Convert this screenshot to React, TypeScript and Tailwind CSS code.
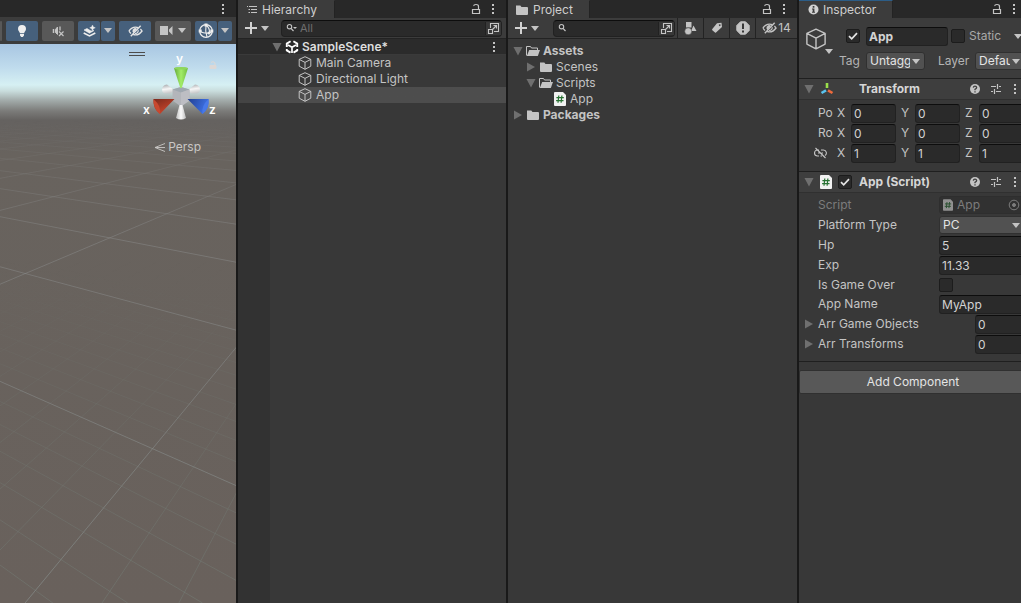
import { useState } from "react";
import type { ReactNode } from "react";

interface IconProps {
  className?: string;
}

function Caret({ className = "" }: IconProps) {
  return (
    <svg viewBox="0 0 8 5" className={`w-2 h-[5px] shrink-0 fill-[#c4c4c4] ${className}`}>
      <path d="M0 0h8L4 5z" />
    </svg>
  );
}

function Foldout({ open, className = "" }: { open: boolean; className?: string }) {
  return (
    <svg viewBox="0 0 10 10" className={`size-[10px] shrink-0 fill-[#6f6f6f] ${className}`}>
      {open ? <path d="M0.5 1h9L5 9.5z" /> : <path d="M1 0.5v9L9 5z" />}
    </svg>
  );
}

function Dots({ className = "" }: IconProps) {
  return (
    <svg viewBox="0 0 4 12" className={`w-1 h-3 shrink-0 fill-[#c4c4c4] ${className}`}>
      <path d="M1 1h2v2H1zM1 5h2v2H1zM1 9h2v2H1z" />
    </svg>
  );
}

function LockOpen({ className = "" }: IconProps) {
  return (
    <svg viewBox="0 0 10 12" className={`w-[10px] h-3 shrink-0 fill-none stroke-current ${className}`}>
      <path d="M1.5 6.5h7v4h-7z" strokeWidth="1.2" />
      <path d="M7.5 6V3.5q0-2-2.5-2T3 3" strokeWidth="1.2" />
    </svg>
  );
}

function Cube({ className = "" }: IconProps) {
  return (
    <svg viewBox="0 0 14 14" className={`shrink-0 fill-none stroke-[#c4c4c4] ${className}`}>
      <path d="M7 .7l5.8 2.7v6.8L7 13.3 1.2 10.2V3.4zM1.2 3.4L7 6.4l5.8-3M7 6.4v6.9" strokeLinejoin="round" />
    </svg>
  );
}

function UnityLogo() {
  return (
    <svg viewBox="0 0 14 14" className="size-[14px] shrink-0 fill-none stroke-white">
      <path d="M5.6 1.3L1.8 3.6V7M8.4 1.3l3.8 2.3V7M1.8 9v1.4L5.5 12.6M12.2 9v1.4L8.5 12.6" strokeWidth="1.9" />
      <path d="M7 7.3v5.7M7 7.3L3 5M7 7.3L11 5" strokeWidth="1.7" />
    </svg>
  );
}

function Folder({ open = false }: { open?: boolean }) {
  return (
    <svg viewBox="0 0 14 12" className="w-[14px] h-3 shrink-0 fill-[#c4c4c4]">
      {open ? (
        <>
          <path d="M.5 10.5V1.5h4l1 1.5h6v2" fill="none" stroke="#c4c4c4" />
          <path d="M3.2 5H14l-2.2 6H.8z" />
        </>
      ) : (
        <path d="M1 1.5h4.3l1.2 1.5H12q1 0 1 1v6q0 1-1 1H2q-1 0-1-1z" />
      )}
    </svg>
  );
}

function ScriptIcon({ dim = false }: { dim?: boolean }) {
  return (
    <svg viewBox="0 0 12 14" className={dim ? "w-[10px] h-3 shrink-0 opacity-50" : "w-3 h-[14px] shrink-0"}>
      <path d="M1 0h8l3 3v10q0 1-1 1H1q-1 0-1-1V1q0-1 1-1z" fill="#f1f1f1" />
      <path d="M4.8 3.5l-.8 7.3M7.9 3.5l-.8 7.3M2.4 5.7h7.4M2.1 8.6h7.4" stroke="#287233" strokeWidth="1.2" />
    </svg>
  );
}

function Popout() {
  return (
    <svg viewBox="0 0 13 13" className="size-[13px] fill-none stroke-[#c4c4c4]">
      <path d="M3.5 6V1.5h8v8H7M1.5 7.5h4v4h-4zM5.5 7.5l4-4M6.5 3.5h3v3" strokeWidth="1.1" />
    </svg>
  );
}

function SearchGlyph({ caret = false }: { caret?: boolean }) {
  return (
    <svg viewBox="0 0 11 10" className="w-[11px] h-[10px] shrink-0 fill-none stroke-[#c4c4c4]">
      <circle cx="3.5" cy="3.7" r="2.2" strokeWidth="1.1" />
      <path d="M5 5.3L7.5 8" strokeWidth="1.2" />
      {caret && <path d="M7 4h4L9 6z" fill="#c4c4c4" stroke="none" />}
    </svg>
  );
}

function EyeSlash({ className = "" }: IconProps) {
  return (
    <svg viewBox="0 0 16 12" className={`shrink-0 fill-none stroke-current ${className}`}>
      <path d="M1 6q3-4.2 7-4.2 1.6 0 3 .6M13.2 4q1 .8 1.8 2-3 4.2-7 4.2-1.4 0-2.6-.5M3.2 8.7Q2 7.5 1 6" strokeWidth="1.4" />
      <path d="M13.5.5L3 11.5" strokeWidth="1.5" />
      <path d="M6 8.2a2.8 2.8 0 0 1 3.6-4.5z" fill="currentColor" stroke="none" />
      <path d="M10.8 5a3 3 0 0 1-3.3 3.7" strokeWidth="1.2" />
    </svg>
  );
}

function PlusMenu({ label }: { label: string }) {
  return (
    <button type="button" aria-label={label} className="flex items-center gap-1 shrink-0">
      <svg viewBox="0 0 12 12" className="size-3 stroke-[#d2d2d2]">
        <path d="M6 0v12M0 6h12" strokeWidth="2" />
      </svg>
      <Caret />
    </button>
  );
}

function CheckBox({ label, defaultChecked = false }: { label: string; defaultChecked?: boolean }) {
  return (
    <span className="relative block size-[14px] shrink-0">
      <input
        type="checkbox"
        aria-label={label}
        defaultChecked={defaultChecked}
        className="peer block size-[14px] appearance-none rounded-xs border border-[#1c1c1c] bg-[#2a2a2a]"
      />
      <svg
        viewBox="0 0 14 14"
        className="hidden peer-checked:block absolute inset-0 size-[14px] fill-none stroke-[#e4e4e4] pointer-events-none"
      >
        <path d="M3 7.2l2.7 2.6L11 4.2" strokeWidth="1.7" />
      </svg>
    </span>
  );
}

function Field({ label, value, className = "" }: { label: string; value: string; className?: string }) {
  return (
    <input
      type="text"
      aria-label={label}
      defaultValue={value}
      className={`block h-[19px] min-w-0 rounded-[3px] border border-[#212121] border-t-[#0d0d0d] bg-[#2a2a2a] px-[2px] text-[#d2d2d2] outline-none ${className}`}
    />
  );
}

function Dropdown({ label, value, className = "" }: { label: string; value: string; className?: string }) {
  return (
    <span className={`relative block ${className}`}>
      <select
        aria-label={label}
        className="block w-full h-[18px] appearance-none rounded-[3px] border border-[#303030] bg-[#515151] pl-[3px] pr-[14px] text-[#e4e4e4] outline-none"
      >
        <option>{value}</option>
      </select>
      <Caret className="absolute right-[5px] top-[7px] pointer-events-none" />
    </span>
  );
}

function PanelTab({
  title,
  icon,
  focused = false,
  className = "",
}: {
  title: string;
  icon: ReactNode;
  focused?: boolean;
  className?: string;
}) {
  return (
    <div className="flex h-[18px] shrink-0 items-center bg-[#282828]">
      <div
        className={`flex h-full items-center gap-1 bg-[#3c3c3c] border-t border-r border-r-[#232323] text-[#cfcfcf] ${focused ? "border-t-[#2c5d87]" : "border-t-[#3c3c3c]"} ${className}`}
      >
        {icon}
        <h2>{title}</h2>
      </div>
      <div className={`ml-auto flex h-4 items-center gap-[10px] text-[#c4c4c4] ${focused ? "pr-[5px]" : "pr-[11px]"}`}>
        <button type="button" aria-label={`Lock ${title}`}>
          <LockOpen />
        </button>
        <button type="button" aria-label={`${title} menu`}>
          <Dots />
        </button>
      </div>
    </div>
  );
}

// Scene grid: two families of lines, each running out of its own vanishing point
const RIGHT_VP = { x: 443, y: 97 };
const LEFT_VP = { x: -662, y: 89 };
const REACH = 514;

function range(start: number, step: number, count: number) {
  return Array.from({ length: count }, (_, i) => start + i * step);
}

function GridLines({ vp, ratios, dir }: { vp: { x: number; y: number }; ratios: number[]; dir: number }) {
  return (
    <>
      {ratios.map((r) => (
        <line key={r} x1={vp.x} y1={vp.y} x2={vp.x + dir * r * REACH} y2={vp.y + REACH} />
      ))}
    </>
  );
}

function SceneBackdrop() {
  return (
    <svg viewBox="0 44 236 559" preserveAspectRatio="xMinYMin slice" className="absolute inset-0 size-full">
      <defs>
        <linearGradient id="sky" gradientUnits="userSpaceOnUse" x1="0" y1="44" x2="0" y2="603">
          <stop offset="0" stopColor="#a8c6e2" />
          <stop offset="0.043" stopColor="#c0dced" />
          <stop offset="0.073" stopColor="#d6f0f3" />
          <stop offset="0.084" stopColor="#c9dddd" />
          <stop offset="0.1" stopColor="#a4adac" />
          <stop offset="0.12" stopColor="#7b7b79" />
          <stop offset="0.136" stopColor="#656260" />
          <stop offset="0.2" stopColor="#68635e" />
          <stop offset="1" stopColor="#69615c" />
        </linearGradient>
        <linearGradient id="farFade" gradientUnits="userSpaceOnUse" x1="0" y1="120" x2="0" y2="240">
          <stop offset="0" stopColor="#000" />
          <stop offset="1" stopColor="#fff" />
        </linearGradient>
        <linearGradient id="nearFade" gradientUnits="userSpaceOnUse" x1="0" y1="260" x2="0" y2="600">
          <stop offset="0" stopColor="#000" />
          <stop offset="1" stopColor="#fff" />
        </linearGradient>
        <mask id="far" maskUnits="userSpaceOnUse" x="0" y="44" width="236" height="559">
          <rect y="44" width="236" height="559" fill="url(#farFade)" />
        </mask>
        <mask id="near" maskUnits="userSpaceOnUse" x="0" y="44" width="236" height="559">
          <rect y="44" width="236" height="559" fill="url(#nearFade)" />
        </mask>
      </defs>
      <rect y="44" width="236" height="559" fill="url(#sky)" />
      <g mask="url(#near)" stroke="#77827c" strokeOpacity="0.55" strokeWidth="0.8">
        <GridLines vp={RIGHT_VP} dir={-1} ratios={range(0.218, 0.152, 20)} />
        <GridLines vp={LEFT_VP} dir={1} ratios={range(0.954, 0.1456, 22)} />
      </g>
      <g mask="url(#far)" stroke="#8d9190" strokeOpacity="0.5" strokeWidth="0.9">
        <GridLines vp={RIGHT_VP} dir={-1} ratios={range(0.826, 1.54, 10)} />
        <GridLines vp={LEFT_VP} dir={1} ratios={range(2.2645, 1.46, 14)} />
      </g>
    </svg>
  );
}

function AxisGizmo() {
  return (
    <svg viewBox="140 50 90 80" className="absolute right-[6px] top-[6px] w-[90px] h-20">
      <defs>
        <linearGradient id="gy">
          <stop offset="0" stopColor="#64a83a" />
          <stop offset="0.5" stopColor="#a2ec68" />
          <stop offset="1" stopColor="#70bd42" />
        </linearGradient>
        <linearGradient id="gx" x1="0" y1="0" x2="0.6" y2="1">
          <stop offset="0" stopColor="#7a2a1d" />
          <stop offset="1" stopColor="#d0472c" />
        </linearGradient>
        <linearGradient id="gz" x1="0" y1="0" x2="1" y2="0.3">
          <stop offset="0" stopColor="#213f91" />
          <stop offset="1" stopColor="#3f72e6" />
        </linearGradient>
        <linearGradient id="gw">
          <stop offset="0" stopColor="#bdbdbd" />
          <stop offset="0.5" stopColor="#fafafa" />
          <stop offset="1" stopColor="#bebebe" />
        </linearGradient>
        <linearGradient id="gs" x1="0.3" y1="0" x2="0.5" y2="1">
          <stop offset="0" stopColor="#a9adb0" />
          <stop offset="0.5" stopColor="#f6f6f6" />
          <stop offset="1" stopColor="#c4c6c7" />
        </linearGradient>
      </defs>
      <path d="M162 90q0-5 5-5.500L174 90l-3 3.500-6.500 0q-2.500-1-2.500-3.500z" fill="url(#gs)" />
      <path d="M200 90q0-5-5-5.500L188 90l3 3.500 6.500 0q2.500-1 2.500-3.500z" fill="url(#gs)" />
      <path d="M172.500 89.500l8.500-2.500 8.500 2.500v11l-8.500 6-8.500-6z" fill="#b3b5ba" />
      <path d="M172.500 89.500l8.500-2.500 8.500 2.500-8.500 3z" fill="#9fa8b0" />
      <path d="M181 92.500l8.500-3v11l-8.500 6z" fill="#bdbec3" />
      <path d="M174 68q7-2 14 0l-6.300 20h-1.400z" fill="url(#gy)" />
      <ellipse cx="181" cy="68.3" rx="7" ry="1.3" fill="#8ed65c" />
      <path d="M179.5 105h3l3.500 13q-5 3-10 0z" fill="url(#gw)" />
      <path d="M174.500 99l-14.500 15q-7-5-6.500-15z" fill="url(#gx)" />
      <path d="M153.500 99q-1 9 6.500 15 1.500-8-6.500-15z" fill="#c8482f" />
      <path d="M187.500 99l15 15q7-5 6-15z" fill="url(#gz)" />
      <path d="M208.500 99q1 9-6 15-1.500-8 6-15z" fill="#4779ea" />
      <g className="fill-white text-xs font-semibold">
        <text x="176" y="63">y</text>
        <text x="143" y="114">x</text>
        <text x="209" y="114">z</text>
      </g>
      <g fill="#dcd8d6" stroke="#dcd8d6">
        <path d="M210 65.500h6v3h-6z" />
        <path d="M215 65v-2q-2-2.500-4-.5" fill="none" />
      </g>
    </svg>
  );
}

function ToolButton({ label, className, children }: { label: string; className: string; children: ReactNode }) {
  return (
    <button
      type="button"
      aria-label={label}
      className={`flex h-5 shrink-0 items-center justify-center rounded-xs text-[#e4e4e4] ${className}`}
    >
      {children}
    </button>
  );
}

function ScenePanel() {
  return (
    <section className="flex min-w-0 flex-col overflow-hidden">
      <div className="flex h-[17px] shrink-0 items-center justify-end bg-[#282828] pr-[11px]">
        <button type="button" aria-label="Scene menu">
          <Dots />
        </button>
      </div>
      <div className="flex h-[27px] shrink-0 items-center justify-end gap-1 bg-[#3c3c3c] pr-1">
        <ToolButton label="2D view" className="w-[2px] bg-[#585858]">
          {null}
        </ToolButton>
        <ToolButton label="Scene lighting" className="w-8 bg-[#46607c]">
          <svg viewBox="0 0 10 12" className="w-[10px] h-3 fill-[#eee]">
            <path d="M5 0a4 4 0 0 1 4 4c0 2-1.7 2.6-1.9 4.2H2.9C2.7 6.6 1 6 1 4a4 4 0 0 1 4-4zM3 9h4v1.5L5.8 12H4.2L3 10.5z" />
          </svg>
        </ToolButton>
        <ToolButton label="Scene audio" className="w-8 bg-[#585858]">
          <svg viewBox="0 0 12 12" className="size-3 fill-[#c4c4c4] stroke-[#c4c4c4]">
            <path d="M1.5 4v4" strokeWidth="1.5" />
            <path d="M3.5 4.5L5.5 2v7.5L3.5 7.5z" />
            <path d="M7 6.5l4.5 4.5M11.5 6.5L7 11" strokeWidth="1.2" />
            <path d="M8 1.5v4" strokeWidth="1.3" />
          </svg>
        </ToolButton>
        <div className="flex gap-px">
          <ToolButton label="Scene effects" className="w-[22px] bg-[#46607c]">
            <svg viewBox="0 0 13 12" className="w-[13px] h-3 fill-[#eee] stroke-[#eee]">
              <path d="M1 5l3-1.5L8 6l3-.5-4.5 2.7z" strokeWidth=".6" />
              <path d="M.7 8l5.8 3 5.8-3" fill="none" strokeWidth="1.5" />
              <path d="M9.5 0l.9 1.9 1.9.9-1.9.9-.9 1.9-.9-1.9-1.9-.9 1.9-.9z" strokeWidth=".4" />
            </svg>
          </ToolButton>
          <ToolButton label="Effects options" className="w-[14px] bg-[#46607c]">
            <Caret />
          </ToolButton>
        </div>
        <ToolButton label="Scene visibility" className="w-8 bg-[#46607c]">
          <EyeSlash className="w-[15px] h-3" />
        </ToolButton>
        <ToolButton label="Scene camera" className="w-9 gap-[5px] bg-[#585858]">
          <svg viewBox="0 0 13 9" className="w-[13px] h-[9px] fill-[#c4c4c4]">
            <path d="M0 0h8v9H0zM9 3.5L12.5 0v9L9 5.5z" />
          </svg>
          <Caret />
        </ToolButton>
        <div className="flex gap-px">
          <ToolButton label="Gizmos" className="w-[22px] bg-[#46607c]">
            <svg viewBox="0 0 16 16" className="size-4 fill-none stroke-[#eee]">
              <circle cx="8" cy="8" r="6.3" strokeWidth="1.2" />
              <path d="M8 2q-1 5.5 1 12M2 8.5q7 3.5 12 0M8 2q4 3 3.5 8" strokeWidth="1.1" />
              <path d="M6.5.5h3v3h-3zM.7 6.5h3v3h-3zM12.3 6.5h3v3h-3z" fill="#eee" stroke="none" />
              <circle cx="11" cy="10" r="1.5" fill="#eee" stroke="none" />
            </svg>
          </ToolButton>
          <ToolButton label="Gizmo options" className="w-[14px] bg-[#46607c]">
            <Caret />
          </ToolButton>
        </div>
      </div>
      <div className="relative flex-1 overflow-hidden">
        <SceneBackdrop />
        <svg viewBox="0 0 16 4" className="absolute left-[129px] top-2 w-4 h-1 stroke-[#4c4c4c]">
          <path d="M0 .5h16M0 3.5h16" />
        </svg>
        <AxisGizmo />
        <button
          type="button"
          className="absolute right-[35px] top-[95px] flex items-center gap-[3px] text-[#c9c7c5]"
        >
          <svg viewBox="0 0 10 9" className="w-[10px] h-[9px] fill-none stroke-current">
            <path d="M10 .5L0 4.5l10 4M0 4.5h10" strokeWidth=".9" />
          </svg>
          Persp
        </button>
      </div>
    </section>
  );
}

const SCENE_OBJECTS = ["Main Camera", "Directional Light", "App"];

function HierarchyPanel() {
  const [selected, setSelected] = useState("App");

  return (
    <section className="flex min-w-0 flex-col overflow-hidden bg-[#383838]">
      <PanelTab
        title="Hierarchy"
        className="pl-2 pr-[17px]"
        icon={
          <svg viewBox="0 0 12 10" className="w-3 h-[10px] fill-none stroke-[#c4c4c4]">
            <path d="M3 1.5h8M5 4.5h6M5 7.5h6M1 1.5h1M2.5 4.5h1.5M2.5 7.5h1.5" />
          </svg>
        }
      />
      <div className="flex h-[21px] shrink-0 items-center gap-3 border-b border-[#232323] bg-[#3c3c3c] pl-[7px] pr-1">
        <PlusMenu label="Create object" />
        <div className="flex h-[17px] min-w-0 flex-1 items-center rounded-[4px] border border-[#212121] border-t-[#0d0d0d] bg-[#2a2a2a] pl-1">
          <SearchGlyph caret />
          <input
            type="text"
            aria-label="Search hierarchy"
            placeholder="All"
            className="min-w-0 flex-1 bg-transparent px-[3px] text-[11px] text-[#d2d2d2] outline-none placeholder:text-[#6f6f6f]"
          />
          <button type="button" aria-label="Open in search" className="border-l border-[#212121] bg-[#383838] px-px">
            <Popout />
          </button>
        </div>
      </div>
      <div className="flex flex-1 flex-col bg-linear-to-r from-[#323232] from-[32px] to-[#383838] to-[32px]">
        <div className="flex h-4 items-center gap-[3px] border-b border-[#3a3a3a] bg-[#2b2b2b] pl-[34px] pr-[10px] font-semibold text-[#dedede]">
          <Foldout open />
          <UnityLogo />
          <span className="flex-1">SampleScene*</span>
          <button type="button" aria-label="Scene options">
            <Dots />
          </button>
        </div>
        <ul>
          {SCENE_OBJECTS.map((name) => (
            <li key={name}>
              <button
                type="button"
                onClick={() => setSelected(name)}
                className={`flex h-4 w-full items-center gap-1 pl-[60px] ${
                  selected === name
                    ? "bg-linear-to-r from-[#444444] from-[32px] to-[#4d4d4d] to-[32px]"
                    : ""
                }`}
              >
                <Cube className="size-[14px]" />
                {name}
              </button>
            </li>
          ))}
        </ul>
      </div>
    </section>
  );
}

function ProjectPanel() {
  return (
    <section className="flex min-w-0 flex-col overflow-hidden bg-[#383838]">
      <PanelTab title="Project" className="pl-[7px] pr-4" icon={<Folder />} />
      <div className="flex h-[21px] shrink-0 items-center border-b border-[#232323] bg-[#3c3c3c] pl-[7px]">
        <PlusMenu label="Create asset" />
        <div className="ml-[14px] mr-[2px] flex h-[17px] min-w-0 flex-1 items-center rounded-[4px] border border-[#212121] border-t-[#0d0d0d] bg-[#2a2a2a] pl-1">
          <SearchGlyph />
          <input
            type="text"
            aria-label="Search project"
            className="min-w-0 flex-1 bg-transparent px-1 text-[11px] text-[#d2d2d2] outline-none"
          />
          <button type="button" aria-label="Open in search" className="border-l border-[#212121] bg-[#383838] px-px">
            <Popout />
          </button>
        </div>
        <button
          type="button"
          aria-label="Search by type"
          className="flex h-full w-[26px] items-center justify-center border-l border-[#232323]"
        >
          <svg viewBox="0 0 13 13" className="size-[13px] fill-[#c4c4c4]">
            <path d="M2 0h5.5v5.5H2zM9.5 3.5l3 5.5H7z" />
            <circle cx="4.2" cy="9.3" r="3.5" stroke="#3c3c3c" strokeWidth=".5" />
          </svg>
        </button>
        <button
          type="button"
          aria-label="Search by label"
          className="flex h-full w-[26px] items-center justify-center border-l border-[#232323]"
        >
          <svg viewBox="0 0 12 12" className="size-3 fill-[#c4c4c4]">
            <path d="M6 1.3L10.5.8 11 5 5 10.5Q4.5 11 4 10.5L1.3 8.2Q.8 7.5 1.3 7zM8.7 2.2a.9.9 0 1 0 .1 0z" fillRule="evenodd" />
          </svg>
        </button>
        <button
          type="button"
          aria-label="Import log"
          className="flex h-full w-[26px] items-center justify-center border-l border-[#232323]"
        >
          <svg viewBox="0 0 14 14" className="size-[14px] fill-[#c4c4c4]">
            <path d="M4.5.8h5l3.7 3.7v5l-3.7 3.7h-5L.8 9.5v-5z" strokeLinejoin="round" stroke="#c4c4c4" />
            <path d="M6 2.5h2v5.5H6zM6 9.5h2v2H6z" fill="#383838" />
          </svg>
        </button>
        <button
          type="button"
          aria-label="Hidden packages, 14"
          className="flex h-full w-[42px] items-center justify-center gap-px border-l border-[#232323] text-[#c4c4c4]"
        >
          <EyeSlash className="w-[15px] h-3" />
          <span>14</span>
        </button>
      </div>
      <ul className="pt-1">
        <li>
          <div className="flex h-4 items-center gap-[3px] pl-[5px] font-bold">
            <Foldout open />
            <Folder open />
            Assets
          </div>
          <ul>
            <li className="flex h-4 items-center gap-[3px] pl-[18px]">
              <Foldout open={false} />
              <Folder />
              Scenes
            </li>
            <li>
              <div className="flex h-4 items-center gap-[3px] pl-[18px]">
                <Foldout open />
                <Folder open />
                Scripts
              </div>
              <div className="flex h-4 items-center gap-1 pl-[46px]">
                <ScriptIcon />
                App
              </div>
            </li>
          </ul>
        </li>
        <li className="flex h-4 items-center gap-[3px] pl-[5px] font-bold">
          <Foldout open={false} />
          <Folder />
          Packages
        </li>
      </ul>
    </section>
  );
}

function ComponentHeader({ title, children }: { title: string; children: ReactNode }) {
  return (
    <div className="flex h-[22px] items-center border-y border-t-[#1f1f1f] border-b-[#303030] bg-[#3e3e3e] pl-[5px]">
      <div className="flex w-[55px] items-center gap-[6px]">
        <Foldout open />
        {children}
      </div>
      <h3 className="flex-1 font-bold text-[#d6d6d6]">{title}</h3>
      <div className="flex items-center gap-[9px] pr-1">
        <button type="button" aria-label={`${title} help`}>
          <svg viewBox="0 0 12 12" className="size-3">
            <circle cx="6" cy="6" r="5" fill="#c4c4c4" />
            <path d="M4.3 4.7Q4.5 3.2 6 3.2t1.7 1.4Q7.7 5.5 6 6.3V7.2M6 8.2v1.3" fill="none" stroke="#3e3e3e" strokeWidth="1.3" />
          </svg>
        </button>
        <button type="button" aria-label={`${title} presets`}>
          <svg viewBox="0 0 12 12" className="size-3 fill-none stroke-[#c4c4c4]">
            <path d="M1 3.5h5M9 3.5h2M7.5 1v5M1 8.5h2M6 8.5h5M4.5 6v5" strokeWidth="1.2" />
          </svg>
        </button>
        <button type="button" aria-label={`${title} menu`} className="ml-[2px]">
          <Dots />
        </button>
      </div>
    </div>
  );
}

const VECTORS = [
  { name: "Position", short: "Po", value: "0" },
  { name: "Rotation", short: "Ro", value: "0" },
  { name: "Scale", short: "", value: "1" },
];

function VectorRow({ name, short, value }: { name: string; short: string; value: string }) {
  return (
    <div className="flex h-5 items-center pl-[19px]">
      {short ? (
        <span className="mr-[3px] w-4 shrink-0">{short}</span>
      ) : (
        <button type="button" aria-label="Constrain scale proportions" className="-ml-1 w-[23px]">
          <svg viewBox="0 0 13 12" className="w-[13px] h-3 fill-none stroke-[#c4c4c4]">
            <path d="M5 3H3.5a3 3 0 0 0 0 6H5M7 3h2.5a3 3 0 0 1 1.5 5.500M4 6h2M7.500 6H9M6.500 9h1.500M1.500 1l10 10" strokeWidth="1.1" />
          </svg>
        </button>
      )}
      <div className="-mr-[3px] flex min-w-0 flex-1 gap-[5px]">
        {["X", "Y", "Z"].map((axis) => (
          <label key={axis} className="flex min-w-0 flex-1 items-center">
            <span className="w-[14px] shrink-0">{axis}</span>
            <Field label={`${name} ${axis}`} value={value} className="w-full" />
          </label>
        ))}
      </div>
    </div>
  );
}

function PropertyRow({
  label,
  dim = false,
  compact = false,
  children,
}: {
  label: string;
  dim?: boolean;
  compact?: boolean;
  children: ReactNode;
}) {
  return (
    <div className={`flex items-center pl-[19px] ${compact ? "h-[19px]" : "h-5"}`}>
      <span className={`w-[121px] shrink-0 ${dim ? "text-[#7c7c7c]" : ""}`}>{label}</span>
      <div className="-mr-1 min-w-0 flex-1">{children}</div>
    </div>
  );
}

function ArrayRow({ label }: { label: string }) {
  return (
    <div className="flex h-5 items-center pl-[5px]">
      <button type="button" className="flex w-[171px] shrink-0 items-center gap-1">
        <Foldout open={false} />
        {label}
      </button>
      <Field label={`${label} size`} value="0" className="-mr-1 flex-1" />
    </div>
  );
}

function InspectorPanel() {
  return (
    <section className="flex min-w-0 flex-col overflow-hidden bg-[#383838]">
      <PanelTab
        title="Inspector"
        focused
        className="pl-[9px] pr-4"
        icon={
          <svg viewBox="0 0 11 11" className="size-[11px]">
            <circle cx="5.5" cy="5.5" r="5" fill="#d2d2d2" />
            <path d="M4.7 2h1.7v1.7H4.7zM4 4.6h2.4v3.2H7v1H4v-1h.7V5.5H4z" fill="#3c3c3c" />
          </svg>
        }
      />
      <div className="flex h-[60px] shrink-0 bg-[#3c3c3c] pl-[6px] pt-2">
        <div className="relative mt-[2px] w-[34px] shrink-0">
          <Cube className="size-[22px] [stroke-width:0.9]" />
          <Caret className="absolute left-5 top-[21px]" />
        </div>
        <div className="flex min-w-0 flex-1 flex-col gap-[6px]">
          <div className="flex h-5 items-center">
            <span className="ml-[7px] mr-[6px]">
              <CheckBox label="Active" defaultChecked />
            </span>
            <Field label="Object name" value="App" className="w-[82px] font-bold" />
            <label className="ml-[3px] flex items-center gap-1 text-[#a8a8a8]">
              <CheckBox label="Static" />
              Static
            </label>
            <Caret className="ml-auto -mr-px" />
          </div>
          <div className="flex h-[18px] items-center text-[#b4b4b4]">
            <span className="w-[27px] shrink-0">Tag</span>
            <Dropdown label="Tag" value="Untagged" className="w-[59px] shrink-0" />
            <span className="ml-[13px] w-[37px] shrink-0">Layer</span>
            <Dropdown label="Layer" value="Default" className="-mr-1 min-w-0 flex-1" />
          </div>
        </div>
      </div>

      <div className="pb-2">
        <ComponentHeader title="Transform">
          <svg viewBox="0 0 14 14" className="size-[14px] fill-none">
            <path d="M7 1v5" stroke="#9be04b" strokeWidth="2.6" />
            <path d="M6 8.3L1.5 11" stroke="#5ac2ee" strokeWidth="2.6" />
            <path d="M8 8.3l4.5 2.7" stroke="#ee6a3c" strokeWidth="2.6" />
          </svg>
        </ComponentHeader>
        <div className="pt-[3px]">
          {VECTORS.map((v) => (
            <VectorRow key={v.name} {...v} />
          ))}
        </div>
      </div>

      <ComponentHeader title="App (Script)">
        <ScriptIcon />
        <CheckBox label="Enabled" defaultChecked />
      </ComponentHeader>
      <div className="border-b border-[#1f1f1f] pt-[2px] pb-[7px]">
        <PropertyRow label="Script" dim>
          <div className="flex h-[18px] items-center gap-1 rounded-[3px] border border-[#2e2e2e] bg-[#313131] pl-[3px] pr-1 text-[#7c7c7c]">
            <ScriptIcon dim />
            <span className="flex-1">App</span>
            <svg viewBox="0 0 12 12" className="size-3 fill-none stroke-[#7c7c7c]">
              <circle cx="6" cy="6" r="4.8" />
              <circle cx="6" cy="6" r="1.5" fill="#7c7c7c" />
            </svg>
          </div>
        </PropertyRow>
        <PropertyRow label="Platform Type">
          <Dropdown label="Platform Type" value="PC" />
        </PropertyRow>
        <PropertyRow label="Hp">
          <Field label="Hp" value="5" className="w-full" />
        </PropertyRow>
        <PropertyRow label="Exp">
          <Field label="Exp" value="11.33" className="w-full" />
        </PropertyRow>
        <PropertyRow label="Is Game Over" compact>
          <CheckBox label="Is Game Over" />
        </PropertyRow>
        <PropertyRow label="App Name">
          <Field label="App Name" value="MyApp" className="w-full" />
        </PropertyRow>
        <ArrayRow label="Arr Game Objects" />
        <ArrayRow label="Arr Transforms" />
      </div>
      <button
        type="button"
        className="mt-2 -mr-[6px] h-6 shrink-0 rounded-xs border border-[#303030] bg-[#585858] text-[#e4e4e4]"
      >
        Add Component
      </button>
    </section>
  );
}

export default function App() {
  return (
    <main className="grid h-screen grid-cols-[236fr_268fr_289fr_222fr] gap-[2px] overflow-hidden bg-[#191919] font-['Inter',sans-serif] text-xs text-[#c4c4c4]">
      <ScenePanel />
      <HierarchyPanel />
      <ProjectPanel />
      <InspectorPanel />
    </main>
  );
}
